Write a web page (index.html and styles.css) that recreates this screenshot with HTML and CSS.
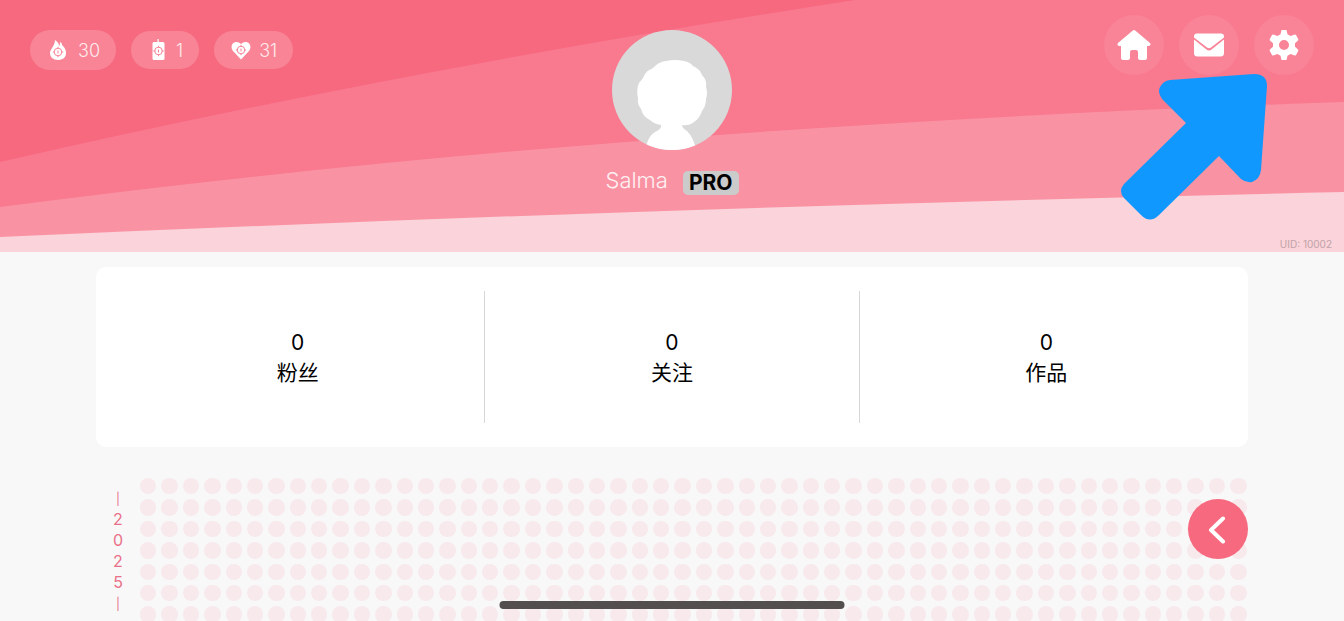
FILE: index.html
```
<!DOCTYPE html>
<html lang="zh-CN">
<head>
  <meta charset="UTF-8">
  <meta name="viewport" content="width=device-width, initial-scale=1">
  <title>Salma</title>
  <link rel="stylesheet" href="styles.css">
</head>
<body>
  <header class="hero">
    <svg class="waves" viewBox="0 0 1344 252" preserveAspectRatio="none" aria-hidden="true">
      <path fill="#f9798f" d="M0 162Q400 70 855 0H1344V252H0Z"/>
      <path fill="#f993a3" d="M0 207Q610 127 1344 102V252H0Z"/>
      <path fill="#fbd3da" d="M0 237Q670 207 1344 192V252H0Z"/>
    </svg>

    <div class="badges">
      <span class="badge streak">
        <svg viewBox="0 0 20 22" aria-hidden="true">
          <path fill="#fff" d="M7 1C10 3 11 5 11 7C12 6 12 5 12 3C14 4 14 5 14 6C17 9 18 11 18 14C18 19 14 21 10 21C5 21 2 18 2 14C2 10 7 7 7 1Z"/>
          <g fill="none" stroke="#f98498"><circle cx="10" cy="13" r="3.8"/><path d="M10 7.8v2M10 16.2v2M4.8 13h2M13.2 13h2M10 11.500v3"/></g>
        </svg>
        30
      </span>
      <span class="badge">
        <svg viewBox="0 0 20 22" aria-hidden="true">
          <path fill="#fff" d="M9.5 0h1.2v3H15q1.500 0 1.500 1.500v15Q16.500 21 15 21H6q-1.500 0-1.500-1.500v-15Q4.500 3 6 3h3.500Z"/>
          <g fill="none" stroke="#f98498"><circle cx="10.500" cy="12" r="3.800"/><path d="M10.500 6.800v2M10.500 15.200v2M5.300 12h2M13.700 12h2M10.500 10.500v3"/></g>
        </svg>
        1
      </span>
      <span class="badge">
        <svg viewBox="0 0 20 22" aria-hidden="true">
          <path fill="#fff" d="M10 20.500L2 12C-1 8 1 3 5.500 3Q8 3 10 5Q12 3 14.500 3C19 3 21 8 18 12Z"/>
          <g fill="none" stroke="#f98498"><circle cx="10" cy="11" r="3.800"/><path d="M10 5.800v2M10 14.200v2M4.800 11h2M13.200 11h2M10 9.500v3"/></g>
        </svg>
        31
      </span>
    </div>

    <div class="profile">
      <svg class="avatar" viewBox="0 0 120 120" role="img" aria-label="Salma">
        <defs><clipPath id="round"><circle cx="60" cy="60" r="60"/></clipPath></defs>
        <g clip-path="url(#round)">
          <path fill="#d8d9d8" d="M0 0h120v120H0z"/>
          <path fill="#fff" d="M54 31Q63 29 72 31Q78 32 81 36Q88 39 90 45Q95 50 94 57Q96 63 94 69Q94 76 90 81Q88 88 82 92Q77 96 70 95Q70 98 75 101Q82 108 84 120H33Q36 106 43 102Q50 99 49 95Q42 94 38 90Q31 87 29 79Q25 74 26 68Q24 60 27 53Q31 49 33 44Q36 40 41 38Q46 32 54 31Z"/>
        </g>
      </svg>
      <div class="name-row">
        <span class="name">Salma</span>
        <span class="pro">PRO</span>
      </div>
    </div>

    <nav class="actions">
      <button type="button" aria-label="主页">
        <svg viewBox="0 0 36 36" aria-hidden="true"><path fill="#fff" d="M16.500 3.700Q18 2.500 19.500 3.700L34 16Q35.500 18 33 19H31V31Q31 33 29 33H24Q22 33 22 31V25Q22 23 20 23H16Q14 23 14 25V31Q14 33 12 33H7Q5 33 5 31V19H3Q.5 18 2 16Z"/></svg>
      </button>
      <button type="button" aria-label="消息">
        <svg viewBox="0 0 36 36" aria-hidden="true"><path fill="#fff" d="M6 6.500H30Q33 6.500 33 9.500V10.500L20 20.500Q18 22 16 20.500L3 10.500V9.500Q3 6.500 6 6.500ZM3 12.500L15.500 22.500Q18 24.300 20.500 22.500L33 12.500V26Q33 29.500 29.500 29.500H6.500Q3 29.500 3 26Z"/></svg>
      </button>
      <button type="button" aria-label="设置">
        <svg viewBox="0 0 36 36" aria-hidden="true">
          <path fill="#fff" fill-rule="evenodd" d="M15.500 3H20.500L21.500 7.200L24.500 9L28.700 7.500Q29.500 7.300 30 8L32.300 12.300Q32.600 13 32 13.600L29 16.300V19.700L32 22.400Q32.600 23 32.300 23.700L30 28Q29.500 28.700 28.700 28.500L24.500 27L21.500 28.800L20.500 33H15.500L14.500 28.800L11.500 27L7.300 28.500Q6.500 28.700 6 28L3.700 23.700Q3.400 23 4 22.400L7 19.700V16.300L4 13.600Q3.400 13 3.700 12.300L6 8Q6.500 7.300 7.300 7.500L11.500 9L14.500 7.200ZM18 13A5 5 0 1 0 18 23A5 5 0 1 0 18 13Z"/>
        </svg>
      </button>
    </nav>

    <span class="uid">UID: 10002</span>

    <svg class="pointer" viewBox="0 0 148 148" aria-hidden="true">
      <path fill="#1198ff" d="M50 7L134 1Q147 1 147 13L141 97Q140 106 132 109Q126 110 121 106L99 83L39 142Q30 151 21 142L4 125Q-2 118 4 111L66 50L43 27Q37 20 40 14Q43 8 50 7Z"/>
    </svg>
  </header>

  <main>
    <section class="stats">
      <a href="#fans"><span>0</span><span>粉丝</span></a>
      <a href="#following"><span>0</span><span>关注</span></a>
      <a href="#works"><span>0</span><span>作品</span></a>
    </section>

    <section class="activity">
      <div class="year">
        <span class="bar">|</span><span>2</span><span>0</span><span>2</span><span>5</span><span class="bar">|</span>
      </div>
      <div class="days" id="days"></div>
      <button class="back" type="button" aria-label="返回">
        <svg viewBox="0 0 30 30" aria-hidden="true"><path fill="none" stroke="#fff" stroke-width="4" stroke-linecap="round" stroke-linejoin="round" d="M20 4.500L8 16L20 27.500"/></svg>
      </button>
    </section>
  </main>

  <div class="home-bar"></div>

  <script>
    // 52 weeks x 7 days
    const days = document.getElementById('days');
    for (let i = 0; i < 52 * 7; i++) {
      days.appendChild(document.createElement('i'));
    }
  </script>
</body>
</html>
```
FILE: styles.css
```
* {
  box-sizing: border-box;
}

body {
  margin: 0;
  height: 100vh;
  overflow: hidden;
  background: #f8f8f8;
  color: #000;
  font-family: Inter, "Noto Sans CJK SC", sans-serif;
}

button {
  border: 0;
  padding: 0;
  cursor: pointer;
}

.hero {
  position: relative;
  display: grid;
  grid-template-columns: 1fr auto 1fr;
  align-items: start;
  height: 252px;
  padding: 0 30px;
  background: #f7697f;
}

.waves {
  position: absolute;
  inset: 0;
  width: 100%;
  height: 100%;
}

.badges,
.profile,
.actions {
  position: relative;
}

.badges {
  display: flex;
  align-items: center;
  gap: 15px;
  padding-top: 30px;
}

.badge {
  display: flex;
  align-items: center;
  gap: 8px;
  height: 38px;
  padding: 0 16px 0 17px;
  border-radius: 20px;
  background: rgba(255, 255, 255, 0.18);
  color: #ffe9ec;
  font-size: 18px;
  font-weight: 300;
}

.badge.streak {
  gap: 10px;
  height: 40px;
  padding-left: 18px;
}

.badge svg {
  width: 20px;
  height: 22px;
}

.profile {
  display: flex;
  flex-direction: column;
  align-items: center;
  gap: 16px;
  padding-top: 30px;
}

.avatar {
  width: 120px;
  height: 120px;
}

.name-row {
  display: flex;
  align-items: flex-start;
  gap: 15px;
}

.name {
  color: #fff0f2;
  font-size: 22px;
  font-weight: 300;
  line-height: 28px;
}

.pro {
  height: 24px;
  margin-top: 5px;
  padding: 0 6px;
  border-radius: 5px;
  background: #cbcbcb;
  font-size: 21px;
  font-weight: 700;
  line-height: 24px;
}

.actions {
  display: flex;
  justify-content: flex-end;
  gap: 15px;
  padding-top: 15px;
}

.actions button {
  display: grid;
  place-items: center;
  width: 60px;
  height: 60px;
  border-radius: 50%;
  background: rgba(255, 255, 255, 0.08);
}

.actions svg {
  width: 36px;
  height: 36px;
}

.uid {
  position: absolute;
  right: 12px;
  bottom: 2px;
  color: #c0a3a8;
  font-size: 10px;
  line-height: 12px;
}

.pointer {
  position: absolute;
  top: 73px;
  right: 76px;
  width: 148px;
  height: 148px;
}

main {
  margin: 15px 96px 0;
}

.stats {
  display: flex;
  padding: 24px 15px;
  border-radius: 10px;
  background: #fff;
}

.stats a {
  flex: 1;
  display: flex;
  flex-direction: column;
  align-items: center;
  justify-content: center;
  height: 132px;
  padding-top: 2px;
  color: #000;
  font-size: 21px;
  line-height: 30px;
  text-decoration: none;
}

.stats a + a {
  border-left: 1px solid #d8d8d8;
}

.activity {
  position: relative;
  display: flex;
  align-items: center;
  margin-top: 31px;
}

.year {
  display: flex;
  flex-direction: column;
  width: 44px;
  padding-top: 2px;
  color: #ea6f88;
  font-size: 16px;
  line-height: 21px;
  text-align: center;
}

.year .bar {
  font-size: 12px;
}

.days {
  flex: 1;
  display: grid;
  grid-template-columns: repeat(52, 1fr);
  gap: 5px;
  margin-right: 2px;
}

.days i {
  aspect-ratio: 1;
  border-radius: 50%;
  background: #f7e9ec;
}

.back {
  position: absolute;
  top: 21px;
  right: 0;
  display: grid;
  place-items: center;
  width: 60px;
  height: 60px;
  border-radius: 50%;
  background: #f7697f;
}

.back svg {
  width: 30px;
  height: 30px;
}

.home-bar {
  position: fixed;
  bottom: 12px;
  left: 50%;
  width: 345px;
  height: 8px;
  border-radius: 4px;
  background: #524f4e;
  transform: translateX(-50%);
}
```
